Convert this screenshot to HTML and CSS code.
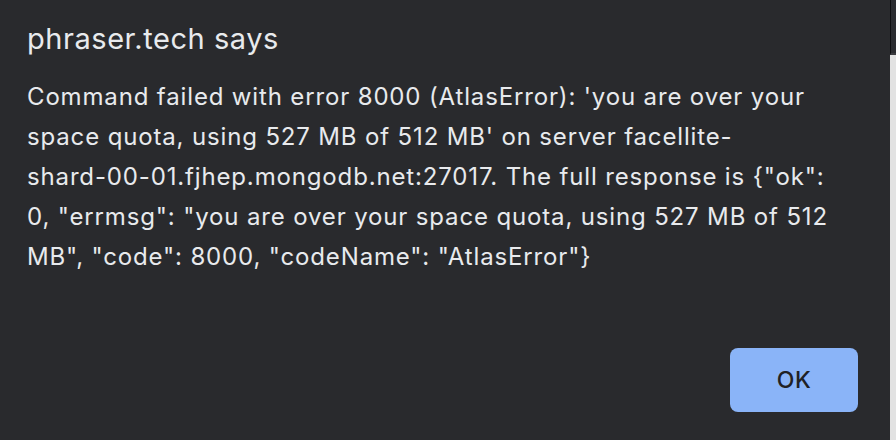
FILE: index.html
```html
<!DOCTYPE html>
<html>
<head>
<meta charset="utf-8">
<link rel="stylesheet" href="styles.css">
</head>
<body>
<div class="screen">
  <div class="dialog">
    <div class="title">phraser.tech says</div>
    <div class="message">Command failed with error 8000 (AtlasError): 'you are over your<br>space quota, using 527 MB of 512 MB' on server facellite-<br>shard-00-01.fjhep.mongodb.net:27017. The full response is {"ok":<br>0, "errmsg": "you are over your space quota, using 527 MB of 512<br>MB", "code": 8000, "codeName": "AtlasError"}</div>
    <div class="actions"><button class="ok">OK</button></div>
  </div>
  <div class="edge">
    <div class="edge-top"></div>
    <div class="edge-bottom"></div>
  </div>
</div>
</body>
</html>
```
FILE: styles.css
```css
html, body {
  margin: 0;
  padding: 0;
  background: #292a2d;
}
.screen {
  display: flex;
  width: 896px;
  height: 440px;
  overflow: hidden;
}
.dialog {
  width: 890px;
  height: 440px;
  box-sizing: border-box;
  background: #292a2d;
  color: #e8eaed;
  font-family: Inter, "Noto Sans", sans-serif;
  display: flex;
  flex-direction: column;
  padding: 22px 32px 28px 27px;
}
.title {
  font-size: 29px;
  line-height: 34px;
  letter-spacing: 0.55px;
}
.message {
  margin-top: 21px;
  font-size: 24px;
  line-height: 40px;
  letter-spacing: 0.85px;
  white-space: nowrap;
}
.actions {
  margin-top: auto;
  display: flex;
  justify-content: flex-end;
}
.ok {
  width: 128px;
  height: 64px;
  border: none;
  border-radius: 8px;
  background: #8ab4f8;
  color: #202124;
  font-family: Inter, "Noto Sans", sans-serif;
  font-size: 23px;
  font-weight: 500;
  letter-spacing: 0.5px;
  padding: 0;
}
.edge {
  flex: 1;
  display: flex;
  flex-direction: column;
}
.edge-top {
  height: 53px;
  background: #2b2c30;
  border-left: 1px solid #0e0e10;
  border-bottom: 2px solid #3c3c40;
}
.edge-bottom {
  flex: 1;
  background: #e2e2e2;
}
```
